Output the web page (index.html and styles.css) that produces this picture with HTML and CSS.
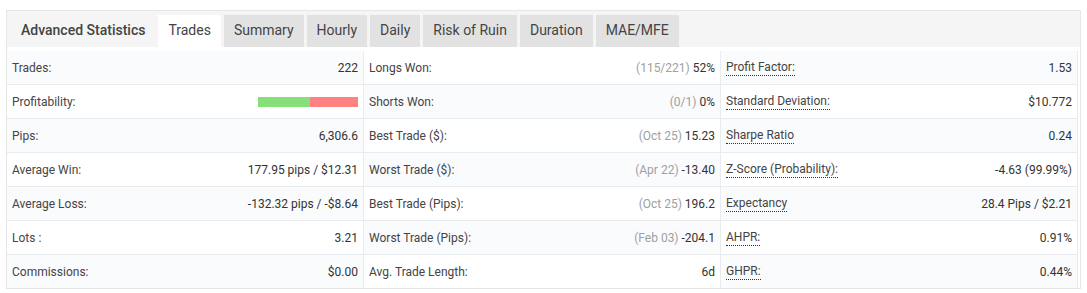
FILE: index.html
```html
<!DOCTYPE html>
<html lang="en">
<head>
    <meta charset="UTF-8">
    <title>Advanced Statistics</title>
    <link rel="stylesheet" href="styles.css">
</head>
<body>
    <div class="stats-container">
        <div class="stats-header">
            <h2 class="stats-title">Advanced Statistics</h2>
            <ul class="stats-tabs">
                <li class="tab active">Trades</li>
                <li class="tab">Summary</li>
                <li class="tab">Hourly</li>
                <li class="tab">Daily</li>
                <li class="tab">Risk of Ruin</li>
                <li class="tab">Duration</li>
                <li class="tab">MAE/MFE</li>
            </ul>
        </div>

        <div class="stats-body">
            <div class="stats-col">
                <div class="stat-row"><span class="stat-label">Trades:</span><span class="stat-value">222</span></div>
                <div class="stat-row">
                    <span class="stat-label">Profitability:</span>
                    <span class="profit-bar">
                        <span class="bar-win" style="width: 52%"></span>
                        <span class="bar-loss" style="width: 48%"></span>
                    </span>
                </div>
                <div class="stat-row"><span class="stat-label">Pips:</span><span class="stat-value">6,306.6</span></div>
                <div class="stat-row"><span class="stat-label">Average Win:</span><span class="stat-value">177.95 pips / $12.31</span></div>
                <div class="stat-row"><span class="stat-label">Average Loss:</span><span class="stat-value">-132.32 pips / -$8.64</span></div>
                <div class="stat-row"><span class="stat-label">Lots :</span><span class="stat-value">3.21</span></div>
                <div class="stat-row"><span class="stat-label">Commissions:</span><span class="stat-value">$0.00</span></div>
            </div>

            <div class="stats-col alt">
                <div class="stat-row"><span class="stat-label">Longs Won:</span><span class="stat-value"><span class="muted">(115/221)</span> 52%</span></div>
                <div class="stat-row"><span class="stat-label">Shorts Won:</span><span class="stat-value"><span class="muted">(0/1)</span> 0%</span></div>
                <div class="stat-row"><span class="stat-label">Best Trade ($):</span><span class="stat-value"><span class="muted">(Oct 25)</span> 15.23</span></div>
                <div class="stat-row"><span class="stat-label">Worst Trade ($):</span><span class="stat-value"><span class="muted">(Apr 22)</span> -13.40</span></div>
                <div class="stat-row"><span class="stat-label">Best Trade (Pips):</span><span class="stat-value"><span class="muted">(Oct 25)</span> 196.2</span></div>
                <div class="stat-row"><span class="stat-label">Worst Trade (Pips):</span><span class="stat-value"><span class="muted">(Feb 03)</span> -204.1</span></div>
                <div class="stat-row"><span class="stat-label">Avg. Trade Length:</span><span class="stat-value">6d</span></div>
            </div>

            <div class="stats-col">
                <div class="stat-row"><span class="stat-label hint">Profit Factor:</span><span class="stat-value">1.53</span></div>
                <div class="stat-row"><span class="stat-label hint">Standard Deviation:</span><span class="stat-value">$10.772</span></div>
                <div class="stat-row"><span class="stat-label hint">Sharpe Ratio</span><span class="stat-value">0.24</span></div>
                <div class="stat-row"><span class="stat-label hint">Z-Score (Probability):</span><span class="stat-value">-4.63 (99.99%)</span></div>
                <div class="stat-row"><span class="stat-label hint">Expectancy</span><span class="stat-value">28.4 Pips / $2.21</span></div>
                <div class="stat-row"><span class="stat-label hint">AHPR:</span><span class="stat-value">0.91%</span></div>
                <div class="stat-row"><span class="stat-label hint">GHPR:</span><span class="stat-value">0.44%</span></div>
            </div>
        </div>
    </div>
</body>
</html>
```

FILE: styles.css
```css
body {
    margin: 0;
    font-family: Roboto, "Liberation Sans", Arial, sans-serif;
    font-size: 12px;
    color: #444;
    background-color: #fff;
}
.stats-container {
    margin: 10px 6px 0 6px;
    border: 1px solid #e6e6e6;
    background-color: #fff;
}
.stats-header {
    display: flex;
    align-items: flex-end;
    height: 36px;
    background-color: #f5f5f5;
}
.stats-title {
    margin: 0 13px 0 0;
    padding-left: 14px;
    height: 32px;
    line-height: 31px;
    font-size: 14px;
    font-weight: 500;
    color: #444;
}
.stats-tabs {
    display: flex;
    gap: 3px;
    margin: 0;
    padding: 0;
    list-style: none;
}
.tab {
    height: 32px;
    line-height: 31px;
    padding: 0 10px;
    font-size: 14px;
    background-color: #e2e2e2;
    color: #444;
    cursor: pointer;
}
.tab.active {
    background-color: #fff;
}
.stats-body {
    display: grid;
    grid-template-columns: repeat(3, 1fr);
    margin: 4px 2px 0 0;
}
.stats-col {
    border-right: 1px solid #e9ecef;
}
.stat-row {
    display: flex;
    justify-content: space-between;
    align-items: center;
    height: 33px;
    padding: 0 5px;
    border-bottom: 1px solid #e9ecef;
}
.stats-col .stat-row:nth-child(odd) {
    background-color: #fafbfd;
}
.stats-col.alt .stat-row:nth-child(odd) {
    background-color: transparent;
}
.stats-col.alt .stat-row:nth-child(even) {
    background-color: #fafbfd;
}
.stats-col .stat-row:last-child {
    border-bottom: none;
}
.stat-value {
    color: #333;
}
.muted {
    color: #a0a0a0;
}
.stat-label.hint {
    border-bottom: 1px dotted #333;
    line-height: 15px;
}
.profit-bar {
    display: flex;
    width: 100px;
    height: 10px;
}
.bar-win {
    background-color: #86df78;
}
.bar-loss {
    background-color: #ff8282;
}
```
